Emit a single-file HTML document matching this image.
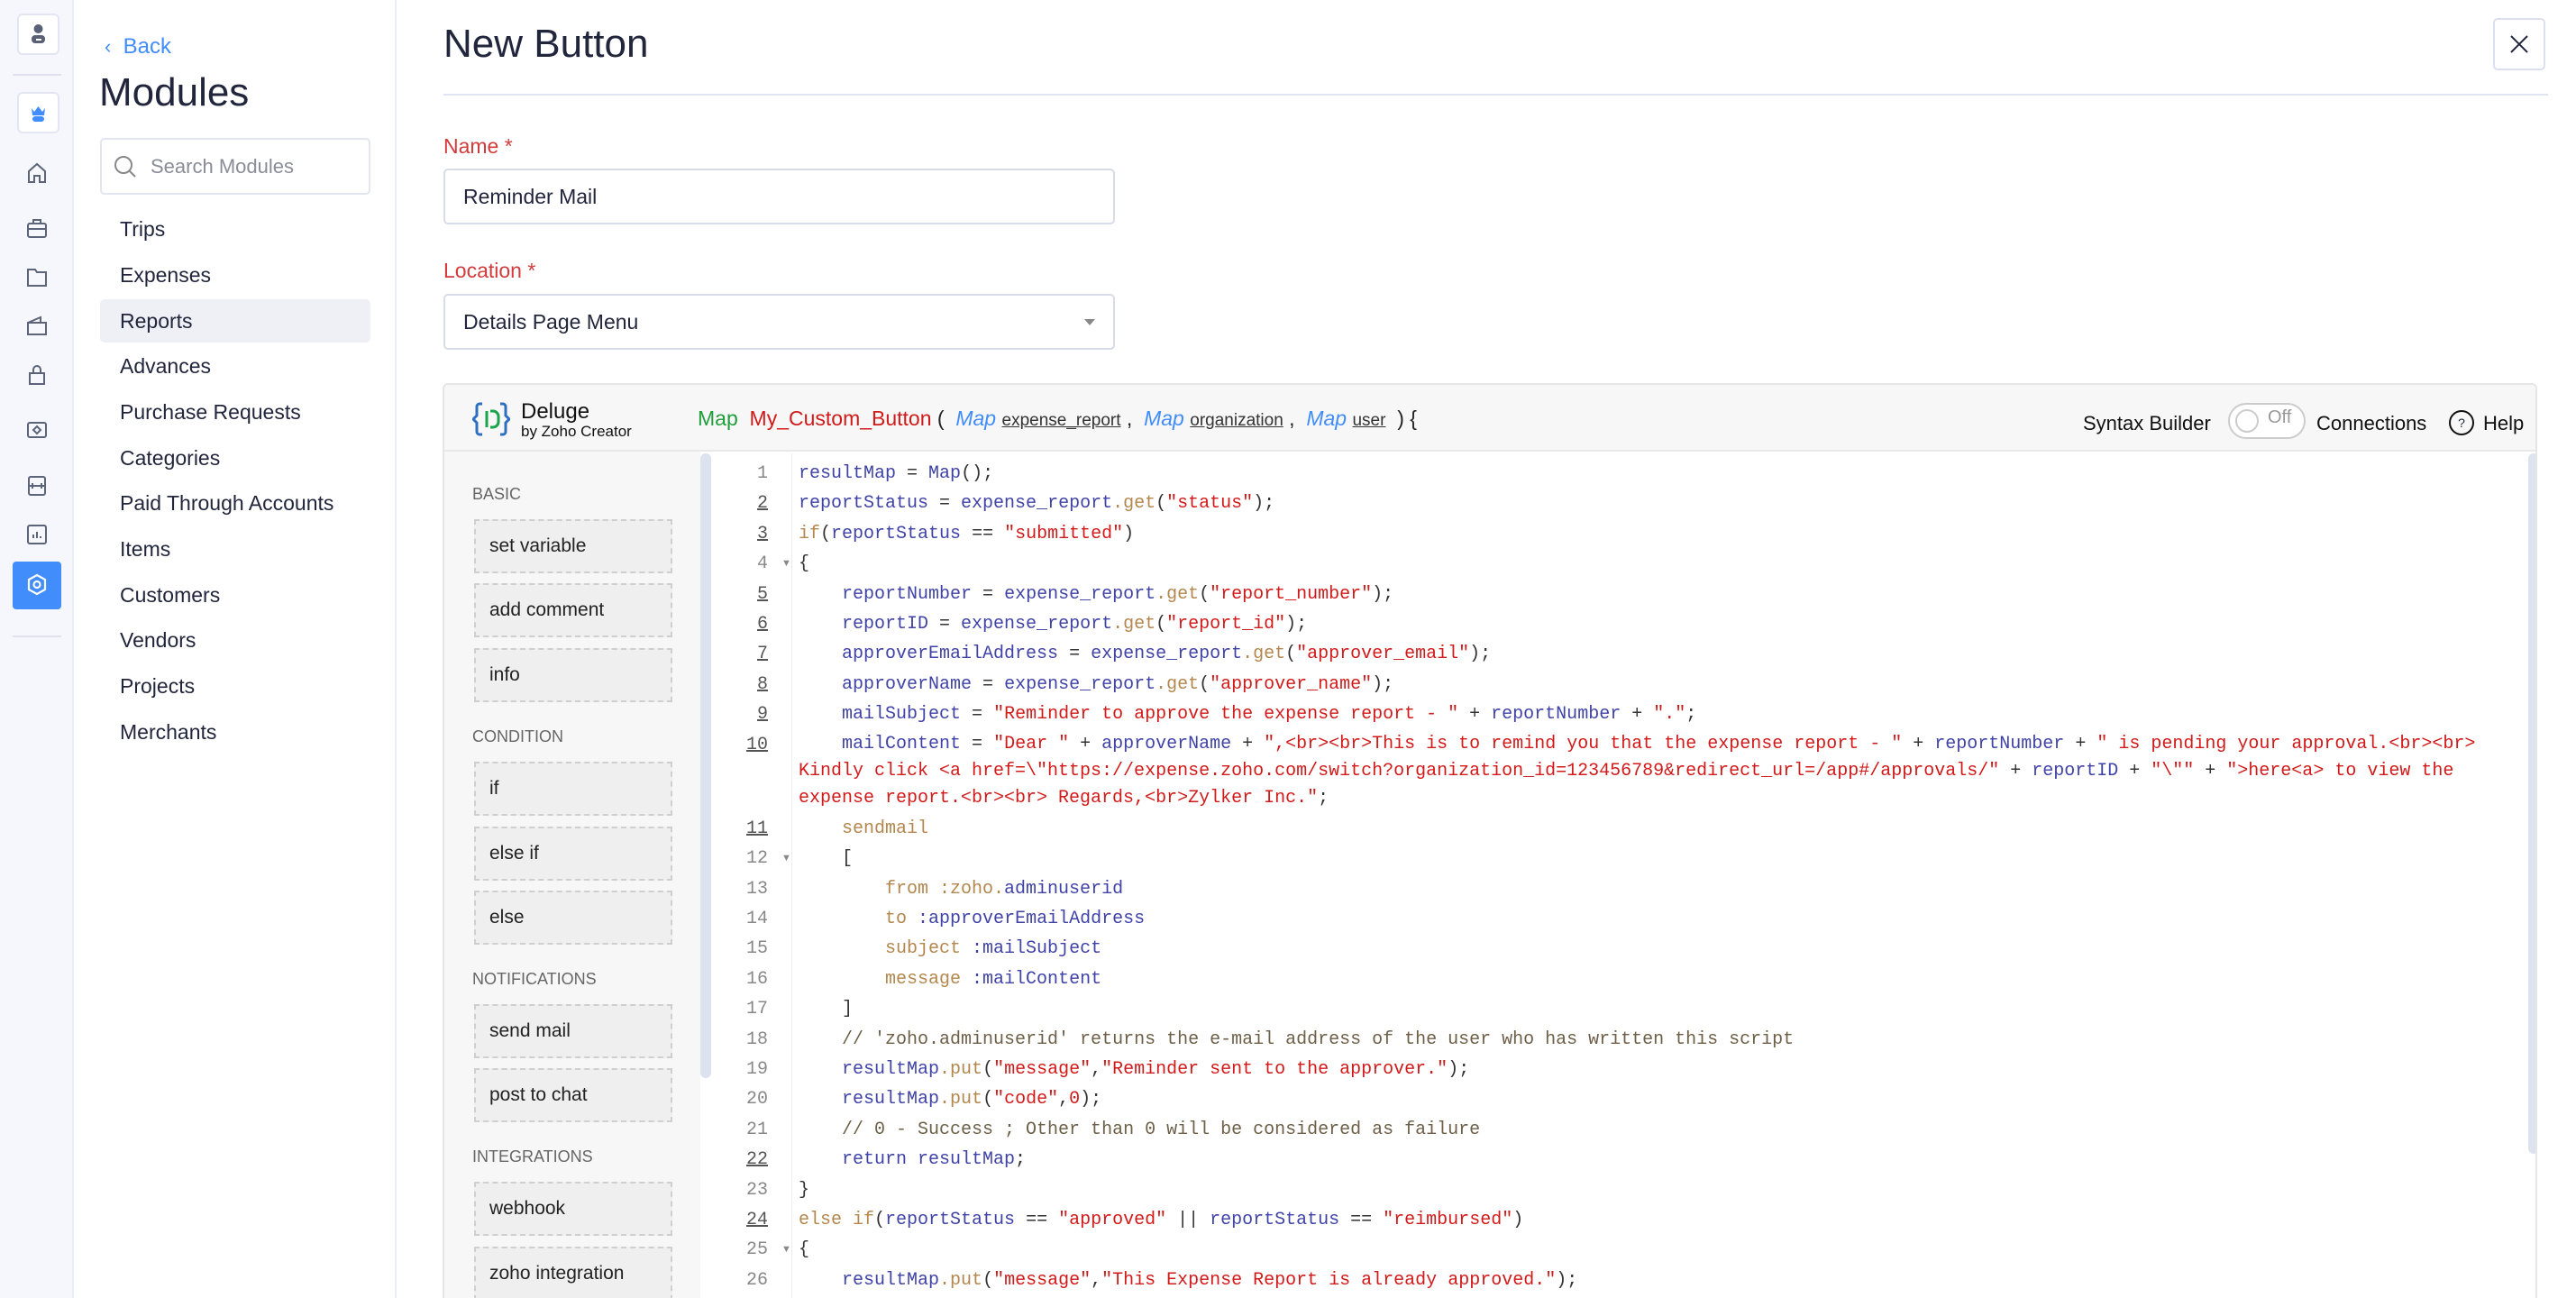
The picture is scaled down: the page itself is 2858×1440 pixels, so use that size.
<!DOCTYPE html>
<html style="overflow:hidden;width:2858px;height:1440px"><head><meta charset="utf-8">
<style>
*{margin:0;padding:0;box-sizing:border-box}
body{width:2858px;height:1440px;overflow:hidden;background:#fff;font-family:"Liberation Sans",sans-serif;position:relative;color:#21263c}
.abs{position:absolute}
.rail{left:0;top:0;width:82px;height:1440px;background:#f6f7fc;border-right:2px solid #eceef6}
.ic{position:absolute;left:27px;width:28px;height:28px}
.mods{left:82px;top:0;width:358px;height:1440px;border-right:2px solid #eceef6}
.item{position:absolute;left:133px;font-size:23px;color:#21263c}
.lab{font-size:23px;color:#d23b3b}
.inp{position:absolute;left:492px;width:745px;height:62px;border:2px solid #d8dbe8;border-radius:5px;font-size:23px;padding-left:20px;line-height:58px}
.ed{left:491px;top:425px;width:2324px;height:1015px;border:2px solid #e6e6e6;border-bottom:none;border-radius:6px 6px 0 0;overflow:hidden}
.pal{position:absolute;left:0;top:74px;width:284px;height:1000px;background:#f7f7f7}
.sec{position:absolute;left:31px;font-size:18px;color:#666}
.box{position:absolute;left:33px;width:220px;height:60px;border:2px dashed #cfcfcf;background:#efefef;font-size:21px;color:#222;padding-left:15px;line-height:56px}
.code{position:absolute;left:0;top:0;font-family:"Liberation Mono",monospace;font-size:20px;color:#333}
.code div{white-space:pre}
.ln{position:absolute;left:800px;width:52px;text-align:right;font-family:"Liberation Mono",monospace;font-size:20px;color:#888}
.u{text-decoration:underline;color:#555}
.v{color:#4043a6}.s{color:#d11a1a}.k{color:#b3874e}.c{color:#6e6048}
.l{height:33.4px;line-height:33.4px}
</style></head><body>
<div class="abs rail"></div>
<div class="abs" style="left:19px;top:15px;width:47px;height:46px;border:2px solid #e3e6f2;border-radius:6px;background:#fff">
<svg width="43" height="42" viewBox="0 0 43 42"><circle cx="21.5" cy="15" r="5" fill="#5a6176"/><rect x="14" y="22" width="15" height="9" rx="4" fill="#5a6176"/><rect x="19" y="26" width="6" height="2" fill="#fff"/></svg></div>
<div class="abs" style="left:14px;top:82px;width:54px;height:2px;background:#dfe2ee"></div>
<div class="abs" style="left:19px;top:102px;width:47px;height:46px;border:2px solid #e3e6f2;border-radius:6px;background:#fff">
<svg width="43" height="42" viewBox="0 0 43 42"><path d="M14 16 L17 20 L21.5 14 L26 20 L29 16 L28 24 H15 Z" fill="#408dfb"/><rect x="15" y="25" width="13" height="6" rx="3" fill="#408dfb"/></svg></div>
<svg class="ic" style="top:178px" viewBox="0 0 28 28" fill="none" stroke="#5b6478" stroke-width="2"><path d="M5 24V12L14 4l9 8v12h-6v-7h-6v7z"/></svg>
<svg class="ic" style="top:239px" viewBox="0 0 28 28" fill="none" stroke="#5b6478" stroke-width="2"><rect x="4" y="9" width="20" height="15" rx="2"/><path d="M10 9V5h8v4M4 15h20"/></svg>
<svg class="ic" style="top:293px" viewBox="0 0 28 28" fill="none" stroke="#5b6478" stroke-width="2"><path d="M4 6h8l2 3h10v15H4z"/></svg>
<svg class="ic" style="top:347px" viewBox="0 0 28 28" fill="none" stroke="#5b6478" stroke-width="2"><path d="M4 11l14-6v5M4 11h20v13H4z"/></svg>
<svg class="ic" style="top:402px" viewBox="0 0 28 28" fill="none" stroke="#5b6478" stroke-width="2"><path d="M6 24V12h16v12zM10 12V8a4 4 0 0 1 8 0v4"/></svg>
<svg class="ic" style="top:463px" viewBox="0 0 28 28" fill="none" stroke="#5b6478" stroke-width="2"><rect x="4" y="6" width="20" height="16" rx="2"/><path d="M14 10l4 4-4 4-4-4z"/></svg>
<svg class="ic" style="top:525px" viewBox="0 0 28 28" fill="none" stroke="#5b6478" stroke-width="2"><rect x="5" y="4" width="18" height="20" rx="2"/><path d="M5 14h18M9 11v6M19 11v6"/></svg>
<svg class="ic" style="top:579px" viewBox="0 0 28 28" fill="none" stroke="#5b6478" stroke-width="2"><rect x="4" y="4" width="20" height="20" rx="2"/><path d="M10 18v-4M14 18v-7M18 18v-2"/></svg>
<div class="abs" style="left:14px;top:623px;width:54px;height:53px;background:#408dfb;border-radius:4px">
<svg width="54" height="53" viewBox="0 0 54 53" fill="none" stroke="#fff" stroke-width="2.2"><path d="M27 15l9 5v11l-9 5-9-5V20z"/><circle cx="27" cy="25.5" r="3.5"/></svg></div>
<div class="abs" style="left:14px;top:705px;width:54px;height:2px;background:#dfe2ee"></div>

<div class="abs mods"></div>
<div class="abs" style="left:116px;top:38px;font-size:24px;color:#408dfb"><span style="font-size:22px">&#8249;</span>&nbsp; Back</div>
<div class="abs" style="left:110px;top:78px;font-size:44px;color:#21263c">Modules</div>
<div class="abs" style="left:111px;top:153px;width:300px;height:63px;border:2px solid #e3e5f1;border-radius:5px"></div>
<svg class="abs" style="left:125px;top:171px" width="28" height="28" viewBox="0 0 28 28" fill="none" stroke="#888" stroke-width="2"><circle cx="12" cy="12" r="9"/><path d="M19 19l6 6"/></svg>
<div class="abs" style="left:167px;top:172px;font-size:22px;color:#8a8d98">Search Modules</div>
<div class="abs" style="left:111px;top:332px;width:300px;height:48px;background:#eef0f6;border-radius:5px"></div>
<div class="item" style="top:241px">Trips</div>
<div class="item" style="top:292px">Expenses</div>
<div class="item" style="top:343px">Reports</div>
<div class="item" style="top:393px">Advances</div>
<div class="item" style="top:444px">Purchase Requests</div>
<div class="item" style="top:495px">Categories</div>
<div class="item" style="top:545px">Paid Through Accounts</div>
<div class="item" style="top:596px">Items</div>
<div class="item" style="top:647px">Customers</div>
<div class="item" style="top:697px">Vendors</div>
<div class="item" style="top:748px">Projects</div>
<div class="item" style="top:799px">Merchants</div>

<div class="abs" style="left:492px;top:24px;font-size:44px;color:#21263c">New Button</div>
<div class="abs" style="left:2766px;top:20px;width:58px;height:58px;border:2px solid #dcdff0;border-radius:5px">
<svg width="54" height="54" viewBox="0 0 54 54" stroke="#21263c" stroke-width="2"><path d="M18 18l18 18M36 18L18 36"/></svg></div>
<div class="abs" style="left:492px;top:104px;width:2335px;height:2px;background:#e0e3f2"></div>
<div class="abs lab" style="left:492px;top:149px">Name *</div>
<div class="inp" style="top:187px">Reminder Mail</div>
<div class="abs lab" style="left:492px;top:287px">Location *</div>
<div class="inp" style="top:326px">Details Page Menu</div>
<div class="abs" style="left:1203px;top:354px;width:0;height:0;border-left:6px solid transparent;border-right:6px solid transparent;border-top:7px solid #888"></div>

<div class="abs ed">
<div style="position:absolute;left:0;top:0;width:100%;height:74px;background:#f7f7f7;border-bottom:2px solid #e8e8e8"></div>
<svg style="position:absolute;left:31px;top:19px" width="42" height="38" viewBox="0 0 42 38" fill="none" stroke-width="3"><path d="M11 2H8a3 3 0 0 0-3 3v10l-4 4 4 4v10a3 3 0 0 0 3 3h3M31 2h3a3 3 0 0 1 3 3v10l4 4-4 4v10a3 3 0 0 1-3 3h-3" stroke="#2d6fc0"/><path d="M16 10v18M20 10h3a6 6 0 0 1 6 6v6a6 6 0 0 1-6 6h-3" stroke="#1aa34a"/></svg>
<div style="position:absolute;left:85px;top:16px;font-size:24px;color:#111">Deluge</div>
<div style="position:absolute;left:85px;top:42px;font-size:17px;color:#111">by Zoho Creator</div>
<div style="position:absolute;left:281px;top:24px;font-size:23px;white-space:pre;color:#222"><span style="color:#1f9e3b">Map</span>  <span style="color:#d11a1a">My_Custom_Button</span> (  <i style="color:#408dfb">Map</i> <u style="font-size:19px;color:#333">expense_report</u> ,  <i style="color:#408dfb">Map</i> <u style="font-size:19px;color:#333">organization</u> ,  <i style="color:#408dfb">Map</i> <u style="font-size:19px;color:#333">user</u>  ) {</div>
<div style="position:absolute;left:1818px;top:30px;font-size:22px;color:#111">Syntax Builder</div>
<div style="position:absolute;left:1979px;top:20px;width:86px;height:40px;border:2px solid #ccc;border-radius:20px;background:#fff"><div style="position:absolute;left:6px;top:5px;width:26px;height:26px;border:2px solid #ccc;border-radius:50%"></div><div style="position:absolute;left:42px;top:3px;font-size:20px;color:#999">Off</div></div>
<div style="position:absolute;left:2077px;top:30px;font-size:22px;color:#111">Connections</div>
<div style="position:absolute;left:2224px;top:28px;width:28px;height:28px;border:2px solid #111;border-radius:50%;font-size:14px;text-align:center;line-height:24px">?</div>
<div style="position:absolute;left:2262px;top:30px;font-size:22px;color:#111">Help</div>

<div class="pal">
<div class="sec" style="top:37px">BASIC</div>
<div class="box" style="top:75px">set variable</div>
<div class="box" style="top:146px">add comment</div>
<div class="box" style="top:218px">info</div>
<div class="sec" style="top:306px">CONDITION</div>
<div class="box" style="top:344px">if</div>
<div class="box" style="top:416px">else if</div>
<div class="box" style="top:487px">else</div>
<div class="sec" style="top:575px">NOTIFICATIONS</div>
<div class="box" style="top:613px">send mail</div>
<div class="box" style="top:684px">post to chat</div>
<div class="sec" style="top:772px">INTEGRATIONS</div>
<div class="box" style="top:810px">webhook</div>
<div class="box" style="top:882px">zoho integration</div>
</div>
<div style="position:absolute;left:284px;top:76px;width:12px;height:693px;background:#dde2ef;border-radius:6px"></div>
<div style="position:absolute;left:385px;top:76px;width:1px;height:1000px;background:#eee"></div>
<div style="position:absolute;left:2312px;top:76px;width:12px;height:777px;background:#dde2ef;border-radius:6px"></div>
</div>

<div class="abs" style="left:0;top:509px;width:2858px;height:931px;overflow:hidden">
<div class="ln" style="top:0">
<div class="l">1</div><div class="l u">2</div><div class="l u">3</div><div class="l">4</div><div class="l u">5</div><div class="l u">6</div><div class="l u">7</div><div class="l u">8</div><div class="l u">9</div><div class="l u" style="height:93.4px">10</div><div class="l u">11</div><div class="l">12</div><div class="l">13</div><div class="l">14</div><div class="l">15</div><div class="l">16</div><div class="l">17</div><div class="l">18</div><div class="l">19</div><div class="l">20</div><div class="l">21</div><div class="l u">22</div><div class="l">23</div><div class="l u">24</div><div class="l">25</div><div class="l">26</div>
</div>
<div class="abs" style="left:867px;top:110px;font-size:11px;color:#888">&#9660;</div>
<div class="abs" style="left:867px;top:437px;font-size:11px;color:#888">&#9660;</div>
<div class="abs" style="left:867px;top:871px;font-size:11px;color:#888">&#9660;</div>
<div class="code" style="left:886px">
<div class="l"><span class="v">resultMap</span> = <span class="v">Map</span>();</div>
<div class="l"><span class="v">reportStatus</span> = <span class="v">expense_report</span><span class="k">.get</span>(<span class="s">"status"</span>);</div>
<div class="l"><span class="k">if</span>(<span class="v">reportStatus</span> == <span class="s">"submitted"</span>)</div>
<div class="l">{</div>
<div class="l">    <span class="v">reportNumber</span> = <span class="v">expense_report</span><span class="k">.get</span>(<span class="s">"report_number"</span>);</div>
<div class="l">    <span class="v">reportID</span> = <span class="v">expense_report</span><span class="k">.get</span>(<span class="s">"report_id"</span>);</div>
<div class="l">    <span class="v">approverEmailAddress</span> = <span class="v">expense_report</span><span class="k">.get</span>(<span class="s">"approver_email"</span>);</div>
<div class="l">    <span class="v">approverName</span> = <span class="v">expense_report</span><span class="k">.get</span>(<span class="s">"approver_name"</span>);</div>
<div class="l">    <span class="v">mailSubject</span> = <span class="s">"Reminder to approve the expense report - "</span> + <span class="v">reportNumber</span> + <span class="s">"."</span>;</div>
<div style="height:93.4px;line-height:30px;padding-top:1.7px">    <span class="v">mailContent</span> = <span class="s">"Dear "</span> + <span class="v">approverName</span> + <span class="s">",&lt;br&gt;&lt;br&gt;This is to remind you that the expense report - "</span> + <span class="v">reportNumber</span> + <span class="s">" is pending your approval.&lt;br&gt;&lt;br&gt;</span>
<span class="s">Kindly click &lt;a href=\"https://expense.zoho.com/switch?organization_id=123456789&amp;redirect_url=/app#/approvals/"</span> + <span class="v">reportID</span> + <span class="s">"\""</span> + <span class="s">"&gt;here&lt;a&gt; to view the</span>
<span class="s">expense report.&lt;br&gt;&lt;br&gt; Regards,&lt;br&gt;Zylker Inc."</span>;</div>
<div class="l">    <span class="k">sendmail</span></div>
<div class="l">    [</div>
<div class="l">        <span class="k">from :zoho.</span><span class="v">adminuserid</span></div>
<div class="l">        <span class="k">to</span> <span class="v">:approverEmailAddress</span></div>
<div class="l">        <span class="k">subject</span> <span class="v">:mailSubject</span></div>
<div class="l">        <span class="k">message</span> <span class="v">:mailContent</span></div>
<div class="l">    ]</div>
<div class="l">    <span class="c">// 'zoho.adminuserid' returns the e-mail address of the user who has written this script</span></div>
<div class="l">    <span class="v">resultMap</span><span class="k">.put</span>(<span class="s">"message"</span>,<span class="s">"Reminder sent to the approver."</span>);</div>
<div class="l">    <span class="v">resultMap</span><span class="k">.put</span>(<span class="s">"code"</span>,<span class="s">0</span>);</div>
<div class="l">    <span class="c">// 0 - Success ; Other than 0 will be considered as failure</span></div>
<div class="l">    <span class="v">return resultMap</span>;</div>
<div class="l">}</div>
<div class="l"><span class="k">else if</span>(<span class="v">reportStatus</span> == <span class="s">"approved"</span> || <span class="v">reportStatus</span> == <span class="s">"reimbursed"</span>)</div>
<div class="l">{</div>
<div class="l">    <span class="v">resultMap</span><span class="k">.put</span>(<span class="s">"message"</span>,<span class="s">"This Expense Report is already approved."</span>);</div>
</div>
</div>
</body></html>
